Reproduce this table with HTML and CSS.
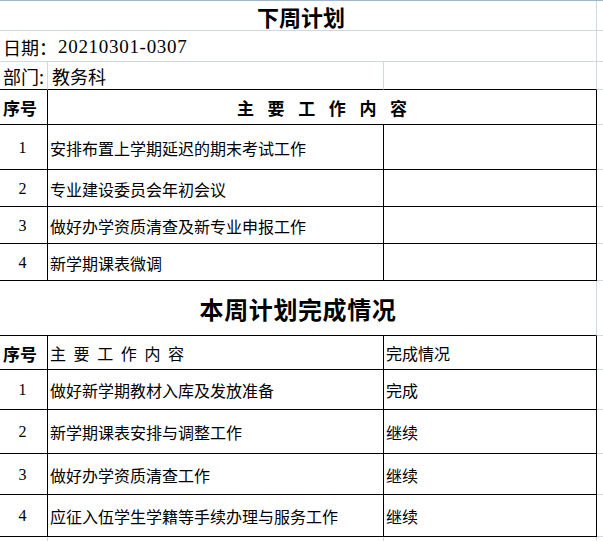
FILE: index.html
```html
<!DOCTYPE html>
<html lang="zh">
<head>
<meta charset="utf-8">
<title>下周计划</title>
<link rel="stylesheet" href="styles.css">
</head>
<body>
<div class="sheet">
  <div class="topline"></div>

  <div class="cell span3 title1">下周计划</div><div class="cell d"></div>

  <div class="cell span3 info"><span>日期：</span><span class="num">20210301-0307</span></div><div class="cell d"></div>

  <div class="cell info kb">部门:</div><div class="cell info kb pl">教务科</div><div class="cell kb"></div><div class="cell d"></div>

  <div class="cell hd k kb">序号</div><div class="cell span2 hd k kb center"><span class="wide">主要工作内容</span></div><div class="cell d"></div>

  <div class="cell k kb center no">1</div><div class="cell k kb pl">安排布置上学期延迟的期末考试工作</div><div class="cell k kb"></div><div class="cell d"></div>
  <div class="cell k kb center no">2</div><div class="cell k kb pl">专业建设委员会年初会议</div><div class="cell k kb"></div><div class="cell d"></div>
  <div class="cell k kb center no">3</div><div class="cell k kb pl">做好办学资质清查及新专业申报工作</div><div class="cell k kb"></div><div class="cell d"></div>
  <div class="cell k kb center no">4</div><div class="cell k kb pl">新学期课表微调</div><div class="cell k kb"></div><div class="cell d"></div>

  <div class="cell span3 kb title2">本周计划完成情况</div><div class="cell d"></div>

  <div class="cell hd k kb">序号</div><div class="cell k kb pl"><span class="spaced">主要工作内容</span></div><div class="cell k kb pl">完成情况</div><div class="cell d"></div>

  <div class="cell k kb center no">1</div><div class="cell k kb pl">做好新学期教材入库及发放准备</div><div class="cell k kb pl">完成</div><div class="cell d"></div>
  <div class="cell k kb center no">2</div><div class="cell k kb pl">新学期课表安排与调整工作</div><div class="cell k kb pl">继续</div><div class="cell d"></div>
  <div class="cell k kb center no">3</div><div class="cell k kb pl">做好办学资质清查工作</div><div class="cell k kb pl">继续</div><div class="cell d"></div>
  <div class="cell k kb center no">4</div><div class="cell k kb pl">应征入伍学生学籍等手续办理与服务工作</div><div class="cell k kb pl">继续</div><div class="cell d"></div>

  <div class="cell"></div><div class="cell"></div><div class="cell"></div><div class="cell d"></div>
</div>
</body>
</html>
```

FILE: styles.css
```css
html, body {
  margin: 0;
  padding: 0;
  background: #ffffff;
}

body {
  font-family: "Noto Sans CJK SC", sans-serif;
  color: #000000;
  overflow: hidden;
}

.sheet {
  display: grid;
  width: 603px;
  grid-template-columns: 48px 336px 213px 1fr;
  grid-template-rows: 1px 30px 31px 28px 35px 45px 37px 37px 37px 55px 34px 40px 44px 41px 42px 10px;
}

.topline {
  grid-column: 1 / -1;
  background: #9eb6ce;
}

.cell {
  box-sizing: border-box;
  border-right: 1px solid #d0d7e5;
  border-bottom: 1px solid #d0d7e5;
  display: flex;
  align-items: center;
  white-space: nowrap;
  overflow: hidden;
  font-size: 16px;
  line-height: 1;
  padding-top: 1px;
}

.cell.d {
  border-right: none;
}

.span3 {
  grid-column: span 3;
}

.span2 {
  grid-column: span 2;
}

.k {
  border-right-color: #000000;
}

.kb {
  border-bottom-color: #000000;
}

.center {
  justify-content: center;
}

.pl {
  padding-left: 2px;
}

.title1 {
  justify-content: center;
  padding-left: 6px;
  font-size: 22px;
  font-weight: 700;
}

.title2 {
  justify-content: center;
  font-size: 24px;
  font-weight: 700;
  letter-spacing: 0.6px;
}

.info {
  font-size: 18px;
  padding-left: 3px;
}

.info.pl {
  padding-left: 4px;
}

.num {
  font-family: "Liberation Serif", serif;
  font-size: 19px;
  letter-spacing: 0.7px;
  margin-left: 1px;
}

.hd {
  font-size: 17px;
  font-weight: 700;
  padding-left: 3px;
}

.hd.center {
  padding-left: 0;
}

.wide {
  letter-spacing: 13.6px;
  margin-right: -13.6px;
}

.spaced {
  letter-spacing: 7.6px;
}

.no {
  font-family: "Liberation Serif", serif;
  font-size: 16px;
  padding-right: 2px;
}
```
